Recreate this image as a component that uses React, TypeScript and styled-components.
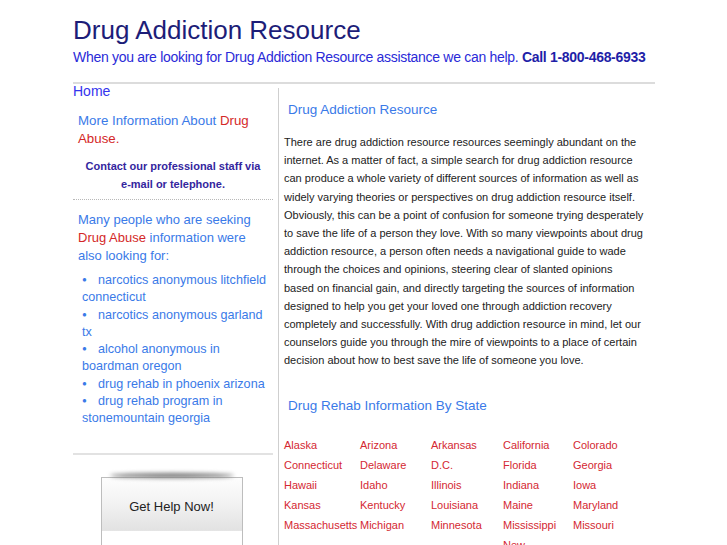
import styled, { createGlobalStyle } from "styled-components";

const GlobalStyle = createGlobalStyle`
  body {
    margin: 0;
    background: #fff;
    font-family: "Liberation Sans", Arial, Helvetica, sans-serif;
  }
`;

const Page = styled.div`
  width: 582px;
  margin-left: 73px;
  padding-top: 14px;
`;

const Header = styled.header`
  padding-bottom: 16px;
  border-bottom: 2px solid #dcdcdc;
`;

const Title = styled.h1`
  margin: 0;
  font-size: 26px;
  line-height: 32px;
  font-weight: 400;
  color: #1d1d78;
`;

const Tagline = styled.p`
  margin: 2px 0 0;
  font-size: 14px;
  letter-spacing: -0.3px;
  line-height: 18px;
  white-space: nowrap;
  color: #2a2ad8;
  strong {
    color: #1f1fa8;
  }
`;

const Columns = styled.div`
  display: grid;
  grid-template-columns: 200px 1fr;
`;

const Sidebar = styled.aside`
  width: 200px;
`;

const HomeLink = styled.a`
  display: block;
  font-size: 14px;
  line-height: 14px;
  color: #3434ee;
  text-decoration: none;
`;

const Blurb = styled.p`
  margin: 14px 0 0;
  padding-left: 5px;
  font-size: 13.3px;
  line-height: 18px;
  color: #3a7ae8;
`;

const Red = styled.span`
  color: #d42828;
`;

const Contact = styled.p`
  margin: 9px 0 0;
  font-size: 11px;
  font-weight: 700;
  line-height: 18px;
  text-align: center;
  color: #34269e;
`;

const Rule = styled.hr<{ $solid?: boolean }>`
  margin: ${(p) => (p.$solid ? "25px" : "6px")} 0 0;
  border: 0;
  border-top: ${(p) => (p.$solid ? "2px solid #e2e2e2" : "1px dotted #b8b8b8")};
`;

const Seeking = styled.p`
  margin: 11px 0 0;
  padding-left: 5px;
  font-size: 13px;
  line-height: 18px;
  color: #3a7ae8;
`;

const LinkList = styled.ul`
  list-style: none;
  margin: 7px 0 0;
  padding: 0 0 0 9px;
`;

const LinkItem = styled.li`
  font-size: 12.6px;
  line-height: 17.3px;
  color: #3a7ae8;
  &::before {
    content: "●";
    font-size: 8px;
    line-height: 0;
    display: inline-block;
    width: 16px;
    vertical-align: 2px;
  }
`;

const HelpBox = styled.div`
  margin-top: 22px;
  display: flex;
  justify-content: center;
  padding-right: 3px;
`;

const HelpButton = styled.div`
  position: relative;
  width: 142px;
  height: 70px;
  border: 1px solid #bdbdbd;
  border-bottom: 0;
  background: linear-gradient(#fdfdfd 0%, #f3f3f3 35%, #e2e2e2 76%, #fff 77%);
  font-size: 13px;
  color: #222;
  text-align: center;
  padding-top: 21px;
  box-sizing: border-box;
  &::before {
    content: "";
    position: absolute;
    left: 8px;
    right: 8px;
    top: -5px;
    height: 5px;
    border-radius: 50%;
    background: #7a7a7a;
    filter: blur(2px);
  }
`;

const Main = styled.main`
  border-left: 1px solid #cfcfcf;
  margin-left: 5px;
  margin-top: 4px;
  padding-left: 5px;
  min-height: 480px;
`;

const SectionTitle = styled.h2<{ $top: number }>`
  margin: ${(p) => p.$top}px 0 0;
  padding-left: 4px;
  font-size: 13.5px;
  line-height: 18px;
  font-weight: 400;
  color: #3a7ae8;
`;

const Body = styled.p`
  margin: 14px 0 0;
  font-size: 11px;
  line-height: 18.2px;
  color: #222;
  width: 362px;
`;

const StateTable = styled.table`
  margin-top: 20px;
  border-collapse: collapse;
  td {
    padding: 0;
    height: 20px;
    font-size: 11px;
    line-height: 20px;
    color: #d42832;
    vertical-align: middle;
    white-space: nowrap;
  }
  td.wrap {
    white-space: normal;
  }
`;

const states = [
  ["Alaska", "Arizona", "Arkansas", "California", "Colorado"],
  ["Connecticut", "Delaware", "D.C.", "Florida", "Georgia"],
  ["Hawaii", "Idaho", "Illinois", "Indiana", "Iowa"],
  ["Kansas", "Kentucky", "Louisiana", "Maine", "Maryland"],
  ["Massachusetts", "Michigan", "Minnesota", "Mississippi", "Missouri"],
  ["Montana", "Nebraska", "Nevada", "New Hampshire", "New Jersey"],
];

const widths = [76, 71, 72, 70, 70];

const links = [
  "narcotics anonymous litchfield connecticut",
  "narcotics anonymous garland tx",
  "alcohol anonymous in boardman oregon",
  "drug rehab in phoenix arizona",
  "drug rehab program in stonemountain georgia",
];

export default function App() {
  return (
    <>
      <GlobalStyle />
      <Page>
        <Header>
          <Title>Drug Addiction Resource</Title>
          <Tagline>
            When you are looking for Drug Addiction Resource assistance we can help.{" "}
            <strong>Call 1-800-468-6933</strong>
          </Tagline>
        </Header>
        <Columns>
          <Sidebar>
            <HomeLink href="#">Home</HomeLink>
            <Blurb>
              More Information About <Red>Drug Abuse.</Red>
            </Blurb>
            <Contact>
              Contact our professional staff via
              <br />
              e-mail or telephone.
            </Contact>
            <Rule />
            <Seeking>
              Many people who are seeking <Red>Drug Abuse</Red> information were also looking for:
            </Seeking>
            <LinkList>
              {links.map((l) => (
                <LinkItem key={l}>{l}</LinkItem>
              ))}
            </LinkList>
            <Rule $solid />
            <HelpBox>
              <HelpButton>Get Help Now!</HelpButton>
            </HelpBox>
          </Sidebar>
          <Main>
            <SectionTitle $top={13}>Drug Addiction Resource</SectionTitle>
            <Body>
              There are drug addiction resource resources seemingly abundant on the internet. As a
              matter of fact, a simple search for drug addiction resource can produce a whole variety
              of different sources of information as well as widely varying theories or perspectives
              on drug addiction resource itself. Obviously, this can be a point of confusion for
              someone trying desperately to save the life of a person they love. With so many
              viewpoints about drug addiction resource, a person often needs a navigational guide to
              wade through the choices and opinions, steering clear of slanted opinions based{"\u00a0"}on
              financial gain, and directly targeting the sources of information designed to help you
              get your loved one through addiction recovery completely and successfully. With drug
              addiction resource in mind, let our counselors guide you through the mire of viewpoints
              to a place of certain decision about how to best save the life of someone you love.
            </Body>
            <SectionTitle $top={27}>Drug Rehab Information By State</SectionTitle>
            <StateTable>
              <tbody>
                {states.map((row, i) => (
                  <tr key={i}>
                    {row.map((s, j) => (
                      <td
                        key={s}
                        className={s.startsWith("New") ? "wrap" : undefined}
                        style={{ width: widths[j] }}
                      >
                        {s}
                      </td>
                    ))}
                  </tr>
                ))}
              </tbody>
            </StateTable>
          </Main>
        </Columns>
      </Page>
    </>
  );
}
